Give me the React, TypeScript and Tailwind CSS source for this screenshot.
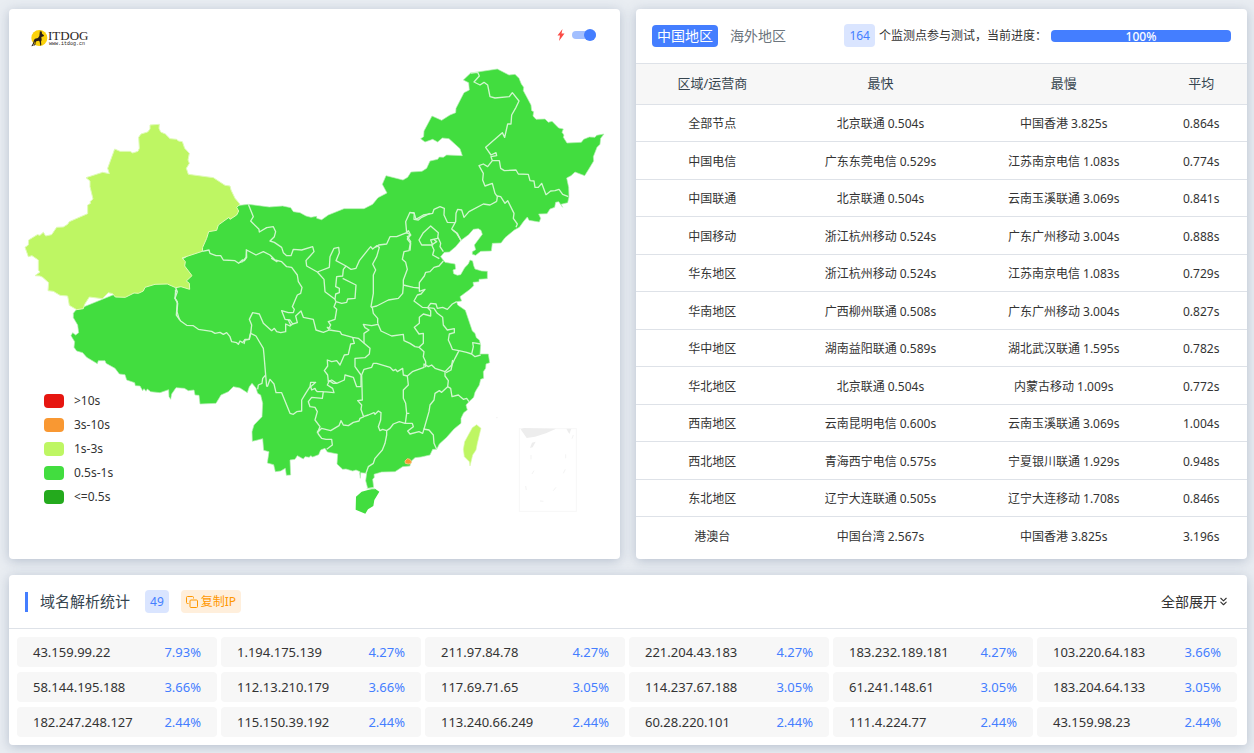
import React, { useState } from 'react';
import { ChevronsDown } from 'lucide-react';

interface RegionRow {
  name: string;
  fastest: string;
  slowest: string;
  average: string;
}

const rows: RegionRow[] = [
  { name: '全部节点', fastest: '北京联通 0.504s', slowest: '中国香港 3.825s', average: '0.864s' },
  { name: '中国电信', fastest: '广东东莞电信 0.529s', slowest: '江苏南京电信 1.083s', average: '0.774s' },
  { name: '中国联通', fastest: '北京联通 0.504s', slowest: '云南玉溪联通 3.069s', average: '0.841s' },
  { name: '中国移动', fastest: '浙江杭州移动 0.524s', slowest: '广东广州移动 3.004s', average: '0.888s' },
  { name: '华东地区', fastest: '浙江杭州移动 0.524s', slowest: '江苏南京电信 1.083s', average: '0.729s' },
  { name: '华南地区', fastest: '广西柳州联通 0.508s', slowest: '广东广州移动 3.004s', average: '0.827s' },
  { name: '华中地区', fastest: '湖南益阳联通 0.589s', slowest: '湖北武汉联通 1.595s', average: '0.782s' },
  { name: '华北地区', fastest: '北京联通 0.504s', slowest: '内蒙古移动 1.009s', average: '0.772s' },
  { name: '西南地区', fastest: '云南昆明电信 0.600s', slowest: '云南玉溪联通 3.069s', average: '1.004s' },
  { name: '西北地区', fastest: '青海西宁电信 0.575s', slowest: '宁夏银川联通 1.929s', average: '0.948s' },
  { name: '东北地区', fastest: '辽宁大连联通 0.505s', slowest: '辽宁大连移动 1.708s', average: '0.846s' },
  { name: '港澳台', fastest: '中国台湾 2.567s', slowest: '中国香港 3.825s', average: '3.196s' },
];

const ips = [
  { ip: '43.159.99.22', share: '7.93%' },
  { ip: '1.194.175.139', share: '4.27%' },
  { ip: '211.97.84.78', share: '4.27%' },
  { ip: '221.204.43.183', share: '4.27%' },
  { ip: '183.232.189.181', share: '4.27%' },
  { ip: '103.220.64.183', share: '3.66%' },
  { ip: '58.144.195.188', share: '3.66%' },
  { ip: '112.13.210.179', share: '3.66%' },
  { ip: '117.69.71.65', share: '3.05%' },
  { ip: '114.237.67.188', share: '3.05%' },
  { ip: '61.241.148.61', share: '3.05%' },
  { ip: '183.204.64.133', share: '3.05%' },
  { ip: '182.247.248.127', share: '2.44%' },
  { ip: '115.150.39.192', share: '2.44%' },
  { ip: '113.240.66.249', share: '2.44%' },
  { ip: '60.28.220.101', share: '2.44%' },
  { ip: '111.4.224.77', share: '2.44%' },
  { ip: '43.159.98.23', share: '2.44%' },
];

const legend = [
  { label: '>10s', color: 'bg-[#e61610]' },
  { label: '3s-10s', color: 'bg-[#f99832]' },
  { label: '1s-3s', color: 'bg-[#bef663]' },
  { label: '0.5s-1s', color: 'bg-[#42dd3f]' },
  { label: '<=0.5s', color: 'bg-[#24aa1d]' },
];

const panel = 'bg-white rounded shadow-[0_2px_12px_rgba(90,110,140,0.35)]';

function Logo() {
  return (
    <div className="flex items-center" aria-label="ITDOG">
      <svg width="17" height="18" viewBox="0 0 51 54" aria-hidden="true">
        <circle cx="25" cy="27" r="24" fill="#fbd20a" />
        <path
          d="M27 4l3 6 2-5 1 9 6 5-1 3-7 2 1 9-2 5 1 10-3 2-2-12-2-3-8 2-2 3-1 8-6 3 1-3 3-3 1-9-3 8-4 7-4 1 5-9 3-10 3-4 9-2 4-6z"
          fill="#2a2018"
        />
      </svg>
      <div className="flex flex-col text-[#2b2523]">
        <span className="font-['Liberation_Serif',serif] text-[13px] leading-3">ITDOG</span>
        <span className="font-['Liberation_Mono',monospace] text-[5px] leading-[5px] pl-px">www.itdog.cn</span>
      </div>
    </div>
  );
}

function ChinaMap() {
  return (
    <svg className="block w-full h-auto" viewBox="27 180 1833 1497" role="img" aria-label="中国地图">
      <g stroke="#c6f4c4" strokeWidth="3" strokeLinejoin="round" fill="#42dd3f">
        {/* mainland */}
        <path
          stroke="#b5efb3"
          strokeWidth="2"
          d="M720 616L745 613 808 621 848 618 872 623 880 635 900 638 918 648 933 652 950 649 950 655 965 659 985 645 1032 626 1092 626 1118 613 1134 593 1161 579 1147 553 1158 527 1209 540 1223 532 1233 516 1266 514 1280 505 1290 483 1313 478 1318 471 1330 472 1340 465 1387 467 1380 446 1347 416 1327 414 1313 426 1298 418 1275 426 1262 416 1271 410 1272 393 1296 348 1325 361 1350 345 1367 338 1368 325 1392 278 1408 270 1406 248 1390 240 1412 219 1492 207 1527 225 1545 223 1557 235 1564 252 1571 262 1570 272 1585 300 1593 315 1595 332 1601 335 1599 348 1608 358 1635 357 1645 367 1656 364 1676 384 1690 387 1686 397 1692 405 1690 412 1701 429 1744 427 1751 418 1768 411 1785 412 1790 406 1812 402 1802 415 1800 433 1791 442 1780 470 1781 483 1766 508 1754 527 1725 516 1713 527 1700 534 1706 562 1707 590 1703 608 1683 613 1688 622 1676 605 1667 607 1664 622 1650 627 1641 641 1616 642 1622 655 1618 666 1587 661 1582 651 1571 664 1558 682 1543 690 1515 713 1503 729 1477 730 1474 753 1442 754 1427 766 1417 763 1417 755 1427 749 1423 735 1447 703 1443 691 1435 686 1420 688 1406 704 1383 721 1367 740 1348 756 1333 757 1322 770 1335 787 1365 792 1367 807 1359 810 1361 821 1372 826 1382 824 1394 803 1405 792 1410 780 1418 783 1421 797 1425 807 1445 813 1462 814 1462 836 1437 838 1437 845 1419 847 1421 857 1410 868 1388 884 1380 890 1385 903 1370 905 1373 915 1396 931 1417 993 1425 1000 1429 1013 1438 1020 1442 1035 1440 1062 1465 1062 1469 1088 1458 1092 1457 1105 1450 1115 1451 1135 1442 1138 1438 1155 1430 1168 1425 1177 1421 1192 1407 1205 1398 1215 1402 1230 1391 1238 1383 1255 1383 1270 1362 1287 1340 1312 1318 1332 1310 1348 1298 1348 1290 1365 1263 1371 1245 1373 1232 1385 1230 1398 1208 1400 1185 1415 1145 1416 1122 1423 1123 1432 1118 1438 1121 1462 1103 1465 1097 1442 1100 1420 1082 1418 1081 1435 1079 1420 1080 1415 1068 1410 1058 1413 1038 1407 1028 1408 1011 1392 1013 1362 982 1356 975 1345 962 1350 956 1364 938 1371 932 1367 928 1372 915 1370 910 1377 892 1367 885 1378 870 1380 872 1425 859 1426 856 1405 842 1413 826 1415 821 1394 802 1389 807 1355 791 1351 788 1316 757 1324 756 1295 762 1275 786 1250 788 1210 782 1185 773 1180 768 1164 756 1150 748 1160 742 1178 720 1164 700 1160 685 1175 663 1185 648 1210 600 1212 597 1186 585 1185 582 1170 565 1172 553 1165 528 1163 515 1182 512 1198 507 1190 506 1169 480 1178 452 1175 442 1167 438 1174 432 1166 428 1172 420 1158 406 1157 404 1148 380 1140 375 1124 358 1122 345 1105 318 1090 315 1082 295 1082 292 1091 260 1072 248 1058 230 1053 222 1042 224 1025 213 1007 218 998 227 1005 236 998 233 975 220 953 220 940 228 930 400 860 560 770 570 720 680 620z"
        />
        {/* Hainan */}
        <path stroke="none" d="M1068 1490L1085 1475 1115 1467 1125 1466 1138 1475 1123 1500 1120 1518 1104 1528 1096 1541 1067 1529z" />
        {/* Xinjiang */}
        <path
          transform="translate(30 330)"
          fill="#bef663"
          stroke="#e0fbb8"
          d="M420 45L448 43 447 55 452 66 466 72 480 86 500 88 505 93 517 95 524 115 538 130 534 150 538 160 529 175 535 193 610 203 645 226 660 228 663 240 675 265 690 283 680 292 686 303 680 315 660 328 657 322 625 345 620 361 596 365 590 385 578 412 577 424 516 444 526 455 524 468 546 497 529 513 538 520 539 538 513 530 497 533 472 522 435 523 405 532 400 543 385 550 372 549 346 562 316 561 308 551 295 548 277 566 238 561 224 583 220 596 200 599 178 586 173 558 150 556 130 544 114 542 116 518 98 502 90 498 75 497 90 486 85 480 85 450 66 437 55 440 45 412 55 405 56 390 82 374 90 376 100 367 107 378 125 374 140 352 160 351 173 343 178 335 233 311 233 285 242 280 240 275 249 267 240 230 240 213 228 203 278 187 298 191 293 175 314 117 330 124 360 124 368 129 384 124 388 115 386 82 393 72 413 66 420 57z"
        />
        {/* Taiwan */}
        <path fill="#bef663" stroke="#dcf9b0" strokeWidth="2" d="M1417 1283L1430 1274 1443 1285 1438 1305 1432 1330 1428 1350 1418 1365 1410 1398 1408 1385 1393 1370 1390 1348 1394 1325 1405 1305z" />
        {/* Hong Kong */}
        <path fill="#f99832" stroke="#f6c27d" d="M1215 1383L1222 1376 1230 1378 1234 1385 1233 1390 1225 1392 1216 1390z" />
      </g>

      {/* province borders */}
      <g fill="none" stroke="#cff7cd" strokeWidth="4" strokeLinejoin="round">
        <path
          transform="translate(30 330)"
          d="M577 424L597 420 600 430 618 437 632 437 640 450 675 452 686 460 697 450 703 452 710 442 709 418M497 533L502 545 495 540M502 545L495 565 503 580 501 605 508 628"
        />
        <path
          transform="translate(180 720)"
          d="M347 150L345 175 352 185 349 225 362 243 380 256 400 257 415 268 455 274 465 280 480 277 490 283 500 278 510 290 515 305 530 308 535 313 540 303 548 308 555 298 567 298 572 278"
        />
        <path
          transform="translate(690 180)"
          d="M55 433L70 470 62 483 87 508 88 516 110 503 130 500 137 515 133 530 120 543 133 547 155 562 160 578 170 587 183 587 190 568 215 570 248 560 252 575 232 597M436 562L446 555 470 552 480 530 500 530 530 518M600 460L575 472 565 480 552 478 553 460 540 457 527 485 530 518 542 525 532 537 542 550 540 572"
        />
        <path
          transform="translate(1230 180)"
          d="M182 39L203 37 208 48 192 66 210 75 222 67 233 75 240 110 255 114 298 110 307 98 327 123 318 142 305 165 303 192 293 192 284 232 277 218 227 262 243 285 258 278 260 287 243 290 247 302 268 302 272 325 283 332 318 330 325 342 355 343 360 362 372 363 375 382 385 382 395 370 408 404 422 393 435 392 447 388 458 403 475 410M247 302L233 320 220 312 207 317 220 340 218 360 225 378 247 370 255 400 262 410 260 424M262 408L272 410 285 430 293 422 312 460 310 475 322 492 318 502M260 424L240 435 220 432 177 455 162 472 155 450 143 448 138 460 137 485 125 507 140 520 153 541M137 488L112 487 102 465 103 445 90 440 72 448 68 460 40 465 18 478 12 458 0 458M62 498L85 518 83 535 62 540 68 555 35 555 27 540 40 518zM83 530L92 550 90 560 100 575 M88 596L68 585 72 570 65 555 80 545 73 540"
        />
        <path
          transform="translate(720 720)"
          d="M32 280L28 298 15 300 12 312M32 280L48 288 55 300 70 325 72 345 77 405 80 440M77 405L68 415 66 430 55 435 53 448M32 280L35 255 28 238 38 218 58 222 70 250 95 272 103 265 110 275 122 278 137 275 137 252 150 258 158 252 150 240 135 238 125 212 145 218 160 218 163 208 157 200 172 165 182 160 186 142 175 125 172 105 155 82 140 80 125 65 105 60 90 45 70 35 48 45 20 30M0 67L8 65 18 52 20 30M105 60L95 55 112 66M145 240L152 255 M158 252L172 248 167 228 183 213 190 232 220 238 228 270 250 277 268 270 262 262 272 265M268 262L272 255 265 245 285 238 290 208 282 200 288 185 285 178 268 165 255 155 252 118 232 96 268 82 270 50 282 25 296 22 298 38 288 62 318 78 310 88 308 108 290 110 287 140 298 145 298 158 287 162 285 178M308 115L348 135 345 175 323 177 320 187 305 190 288 185M202 57L198 62 200 78 232 96M318 78L333 88 348 85 358 62 385 28 392 20 398 27 410 17 418 22 410 50 398 72 407 90 400 105 400 160 393 200 397 203 400 220 413 235 413 250M268 270L300 275 305 283 338 292 355 295 375 312 390 325 388 342 375 353 345 355 345 380 363 405 363 440 350 440 340 412 315 405 313 420 290 430 275 420 265 425 263 405 253 392 263 378 262 360 275 365 290 362 300 375 313 345 325 343 332 312 343 310 338 292"
        />
        <path
          transform="translate(1080 690)"
          d="M138 10L145 2 152 15 142 20 152 35 147 62 132 65 127 88 137 97 142 118 130 150 130 167 128 190 115 205 85 210 50 228 33 232M130 165L160 172 178 174 178 158 193 138 197 127 210 125 222 112 237 108 250 93M178 174L178 184 195 178 183 192 172 195 162 213 187 232 203 233 212 220 228 222 232 235 248 232 262 238 277 222 290 215M203 233L212 242 212 258 190 252 178 262 178 280 163 292 177 312 190 310 190 340 177 352 192 365 190 380 197 395 197 412M203 233L222 235 232 250 248 262 250 285 262 300 283 296 283 308 268 312 265 330 272 345 277 358 297 362 320 367 335 372 340 350 338 338 362 342M335 372L345 380 362 375M297 362L285 385 277 402 273 420 258 428M53 280L63 303 95 318 130 313 132 332 150 340 165 350 177 352M53 283L35 287 10 283 15 293 27 300 12 310 12 340M278 0L292 10 303 32"
        />
        <path
          transform="translate(1050 1080)"
          d="M35 45L42 28 65 22 70 10 80 10 120 22 130 32 137 28 142 35 158 25 160 45 172 48 187 35 222 22 222 12 235 20 245 15 255 25 285 35 285 48 295 62 293 80 302 85 306 110 325 105 340 118 350 115 357 125M308 0L305 15 285 35M293 80L275 97 268 92 255 100 252 120 240 135 237 155 222 207 218 220 207 215 180 222 173 213 190 200 187 190 165 190 148 185 130 192 120 205 110 212 98 208 90 212 85 200 92 180 93 158 85 153 75 163 72 158 55 165 40 170M220 207L237 210 250 225 252 250 260 268M172 48L175 75 160 90 160 115 167 130 170 160 166 190M170 160L178 160M35 45L37 120 23 122 35 135 33 148 40 168M110 212L110 225 105 250 97 270 75 295 70 310 55 320 48 340"
        />
        <path
          transform="translate(720 1080)"
          d="M372 170L360 175 357 183 340 187 325 197 310 195 303 182 297 197 272 212 245 205 232 218 240 200 225 180 232 155 225 142 210 140 205 125 215 112 247 115 250 95 232 95 227 90 225 85 215 90 212 80 227 67 212 67 210 80 197 100 185 120 185 153 170 155 160 163 150 160 125 98 108 98 102 72 90 58 82 80M232 212L235 222 245 235 258 238 275 238 277 255 260 268M250 95L282 98 278 85 262 75 268 62 280 70 290 70M380 386L405 386"
        />
      </g>

      {/* South China Sea inset */}
      <g>
        <rect x="1558" y="1286" width="171" height="248" fill="none" stroke="#f7f7f7" strokeWidth="3" />
        <path
          fill="#ededed"
          d="M1562 1288L1572 1284 1668 1286 1638 1300 1605 1310 1580 1314zM1699 1286L1714 1286 1708 1302zM1590 1344L1596 1328 1607 1325 1598 1342z"
        />
        <path
          fill="none"
          stroke="#f3f3f3"
          strokeWidth="3"
          d="M1720 1305L1716 1316M1697 1363V1375M1696 1408L1690 1420M1668 1462L1660 1472M1593 1365V1378M1602 1412L1596 1422M1577 1458L1579 1470M1620 1503L1630 1504M1488 1253H1493"
        />
      </g>
    </svg>
  );
}

function MapPanel() {
  const [fast, setFast] = useState(true);

  return (
    <section className={`${panel} relative`}>
      <div className="flex items-start justify-between pl-[22px] pr-6 pt-5 h-[51px]">
        <Logo />
        <label className="flex items-center gap-[7px] h-3">
          <svg width="8" height="12" viewBox="0 0 16 24" aria-hidden="true">
            <path d="M11 0L1 13h5L4 24 15 9H9z" fill="#fb4b45" />
          </svg>
          <input
            type="checkbox"
            aria-label="快速模式"
            checked={fast}
            onChange={(e) => setFast(e.target.checked)}
            className="appearance-none w-6 h-2 rounded-full bg-gray-300 checked:bg-[#a2bfff] flex items-center checked:justify-end before:w-3 before:h-3 before:rounded-full before:shrink-0 before:bg-[#447eff]"
          />
        </label>
      </div>
      <ChinaMap />
      {/* Legend */}
      <ul className="absolute left-[35px] bottom-[50px]">
        {legend.map((item) => (
          <li key={item.label} className="flex items-center gap-[10px] h-6 text-xs text-[#333]">
            <span className={`w-5 h-[14px] rounded ${item.color}`} />
            {item.label}
          </li>
        ))}
      </ul>
    </section>
  );
}

function RegionPanel() {
  return (
    <section className={`${panel} overflow-hidden`}>
      <div className="flex items-center h-[54px] px-4 pb-px">
        <div className="flex gap-[7px] text-sm">
          <button type="button" className="h-[22px] px-[5px] leading-[22px] rounded bg-[#447eff] text-white">中国地区</button>
          <button type="button" className="h-[22px] px-[5px] leading-[22px] rounded text-[#6c757d]">海外地区</button>
        </div>
        <div className="ml-auto flex items-center gap-1 text-xs text-[#333] whitespace-nowrap">
          <span className="h-[23px] px-[5px] leading-6 rounded bg-[#dae5ff] text-[#447eff]">164</span>
          <span className="pt-px">个监测点参与测试，当前进度：</span>
          <div
            role="progressbar"
            aria-valuenow={100}
            aria-valuemin={0}
            aria-valuemax={100}
            className="w-[180px] h-3 rounded bg-[#447eff] text-white text-center font-medium leading-[14px]"
          >
            100%
          </div>
        </div>
      </div>
      <table className="w-full table-fixed border-collapse text-center text-xs text-[#333]">
        <thead>
          <tr className="h-[41px] bg-[#f7f7f7] border-y border-[#dee2e8] text-[13px] text-[#36454f]">
            <th scope="col" className="w-[25%] font-normal">区域/运营商</th>
            <th scope="col" className="w-[30%] font-normal">最快</th>
            <th scope="col" className="w-[30%] font-normal">最慢</th>
            <th scope="col" className="w-[15%] font-normal">平均</th>
          </tr>
        </thead>
        <tbody>
          {rows.map((row) => (
            <tr key={row.name} className="odd:h-[37px] even:h-[38px] border-b border-[#dee2e8] last:border-0 *:pt-[2px]">
              <td>{row.name}</td>
              <td>{row.fastest}</td>
              <td>{row.slowest}</td>
              <td>{row.average}</td>
            </tr>
          ))}
        </tbody>
      </table>
    </section>
  );
}

function CopyIcon() {
  return (
    <svg width="12" height="12" viewBox="0 0 12 12" fill="none" stroke="currentColor" aria-hidden="true">
      <rect x="4" y="4" width="7.5" height="7.5" rx="1" />
      <path d="M2.5 7.5h-1a1 1 0 0 1-1-1v-5a1 1 0 0 1 1-1h5a1 1 0 0 1 1 1v1" />
    </svg>
  );
}

function DnsPanel() {
  return (
    <section className={panel}>
      <div className="flex items-center h-[54px] pl-4 pr-[17px] border-b border-[#dee2e8]">
        <span className="w-[3px] h-5 bg-[#447eff]" />
        <h2 className="ml-3 text-[15px] text-[#36454f]">域名解析统计</h2>
        <span className="ml-[15px] h-[23px] px-[5px] leading-6 rounded bg-[#dae5ff] text-[#447eff] text-xs">49</span>
        <button type="button" className="ml-3 h-[23px] px-[5px] pt-px flex items-center gap-[3px] rounded bg-[#ffefdc] text-[#ff9800] text-xs">
          <CopyIcon />
          复制IP
        </button>
        <button type="button" className="ml-auto flex items-center text-sm text-[#333]">
          全部展开
          <ChevronsDown size={13} strokeWidth={2} aria-hidden="true" />
        </button>
      </div>
      <ul className="grid grid-cols-6 gap-x-1 gap-y-[5px] pl-2 pr-[10px] py-2 text-[13px]">
        {ips.map((item) => (
          <li key={item.ip} className="flex items-center justify-between h-[30px] px-4 pt-[2px] rounded bg-[#f7f7f7]">
            <span className="text-[#333]">{item.ip}</span>
            <span className="text-[#447eff]">{item.share}</span>
          </li>
        ))}
      </ul>
    </section>
  );
}

export default function App() {
  return (
    <main className="min-h-screen bg-[#e9edf2] pl-[9px] pr-[7px] pt-[9px] pb-2 flex flex-col gap-4 font-['Noto_Sans','Noto_Sans_CJK_SC',sans-serif]">
      <div className="grid grid-cols-2 gap-4">
        <MapPanel />
        <RegionPanel />
      </div>
      <DnsPanel />
    </main>
  );
}
